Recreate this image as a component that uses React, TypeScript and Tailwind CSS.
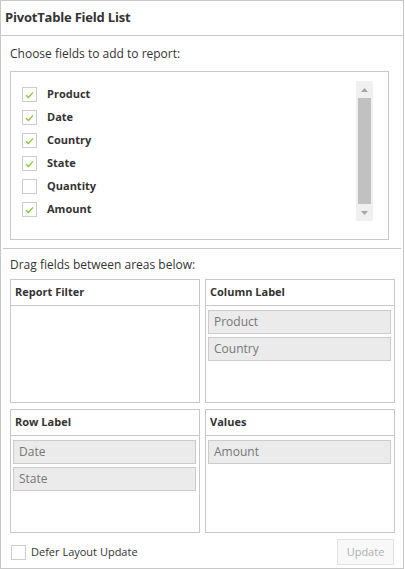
import React from "react";

const fields = [
  { name: "Product", checked: true },
  { name: "Date", checked: true },
  { name: "Country", checked: true },
  { name: "State", checked: true },
  { name: "Quantity", checked: false },
  { name: "Amount", checked: true },
];

const areas = [
  { title: "Report Filter", items: [] as string[] },
  { title: "Column Label", items: ["Product", "Country"] },
  { title: "Row Label", items: ["Date", "State"] },
  { title: "Values", items: ["Amount"] },
];

function Check({ checked }: { checked: boolean }) {
  return (
    <span className="w-[15px] h-[15px] border border-[#cccccc] bg-white flex items-center justify-center shrink-0">
      {checked && (
        <svg width="9" height="8" viewBox="0 0 9 8">
          <path d="M1 4.2 L3.4 6.4 L8 1.4" fill="none" stroke="#8cc63f" strokeWidth="1.4" />
        </svg>
      )}
    </span>
  );
}

export default function App() {
  return (
    <div
      className="w-[404px] h-[569px] border border-[#c8c8c8] bg-white flex flex-col text-[#333333]"
      style={{ fontFamily: '"Open Sans", "Noto Sans", sans-serif' }}
    >
      {/* Header */}
      <div className="h-[35px] border-b border-[#c8c8c8] flex items-center pl-[4px]">
        <span className="text-[13px] font-bold tracking-[-0.2px]">PivotTable Field List</span>
      </div>

      {/* Field chooser */}
      <div className="px-[9px]">
        <p className="mt-[9px] h-[18px] leading-[18px] text-[12px]">Choose fields to add to report:</p>
        <div className="mt-[8px] w-[379px] h-[169px] border border-[#c8c8c8] flex">
          <ul className="flex-1 pt-[11px] pl-[11px]">
            {fields.map((f) => (
              <li key={f.name} className="h-[23px] flex items-center gap-[10px]">
                <Check checked={f.checked} />
                <span className="text-[11px] font-bold">{f.name}</span>
              </li>
            ))}
          </ul>
          <div className="mt-[9px] mr-[15px] w-[17px] h-[140px] bg-[#f0f0f0] flex flex-col items-center">
            <div className="h-[17px] flex items-center justify-center">
              <svg width="7" height="4" viewBox="0 0 7 4">
                <path d="M0 4 L3.5 0 L7 4 Z" fill="#a6a6a6" />
              </svg>
            </div>
            <div className="w-[13px] h-[106px] bg-[#c1c1c1]" />
            <div className="flex-1 flex items-center justify-center">
              <svg width="7" height="4" viewBox="0 0 7 4">
                <path d="M0 0 L7 0 L3.5 4 Z" fill="#a6a6a6" />
              </svg>
            </div>
          </div>
        </div>
      </div>

      <div className="mt-[8px] mx-[2px] border-t border-[#c8c8c8]" />

      {/* Areas */}
      <div className="px-[9px] flex-1 flex flex-col">
        <p className="mt-[7px] h-[18px] leading-[18px] text-[12px]">Drag fields between areas below:</p>
        <div className="mt-[5px] grid grid-cols-[190px_190px] gap-x-[5px] gap-y-[6px]">
          {areas.map((a) => (
            <div key={a.title} className="h-[124px] border border-[#c8c8c8] flex flex-col">
              <div className="h-[26px] border-b border-[#c8c8c8] flex items-center pl-[4px]">
                <span className="text-[11px] font-bold">{a.title}</span>
              </div>
              <div className="pt-[4px] pl-[2px] pr-[3px] flex flex-col gap-[3px]">
                {a.items.map((it) => (
                  <div
                    key={it}
                    className="h-[24px] border border-[#cccccc] bg-[#ebebeb] flex items-center pl-[5px] text-[12px] text-[#777777]"
                  >
                    {it}
                  </div>
                ))}
              </div>
            </div>
          ))}
        </div>

        {/* Footer */}
        <div className="mt-[6px] flex items-center justify-between">
          <label className="flex items-center gap-[5px] pl-[1px]">
            <span className="w-[15px] h-[15px] border border-[#cccccc] bg-white" />
            <span className="text-[11px] text-[#333333]">Defer Layout Update</span>
          </label>
          <button className="w-[57px] h-[26px] border border-[#e3e3e3] bg-[#f8f8f8] text-[11px] text-[#b0b0b0]">
            Update
          </button>
        </div>
      </div>
    </div>
  );
}
